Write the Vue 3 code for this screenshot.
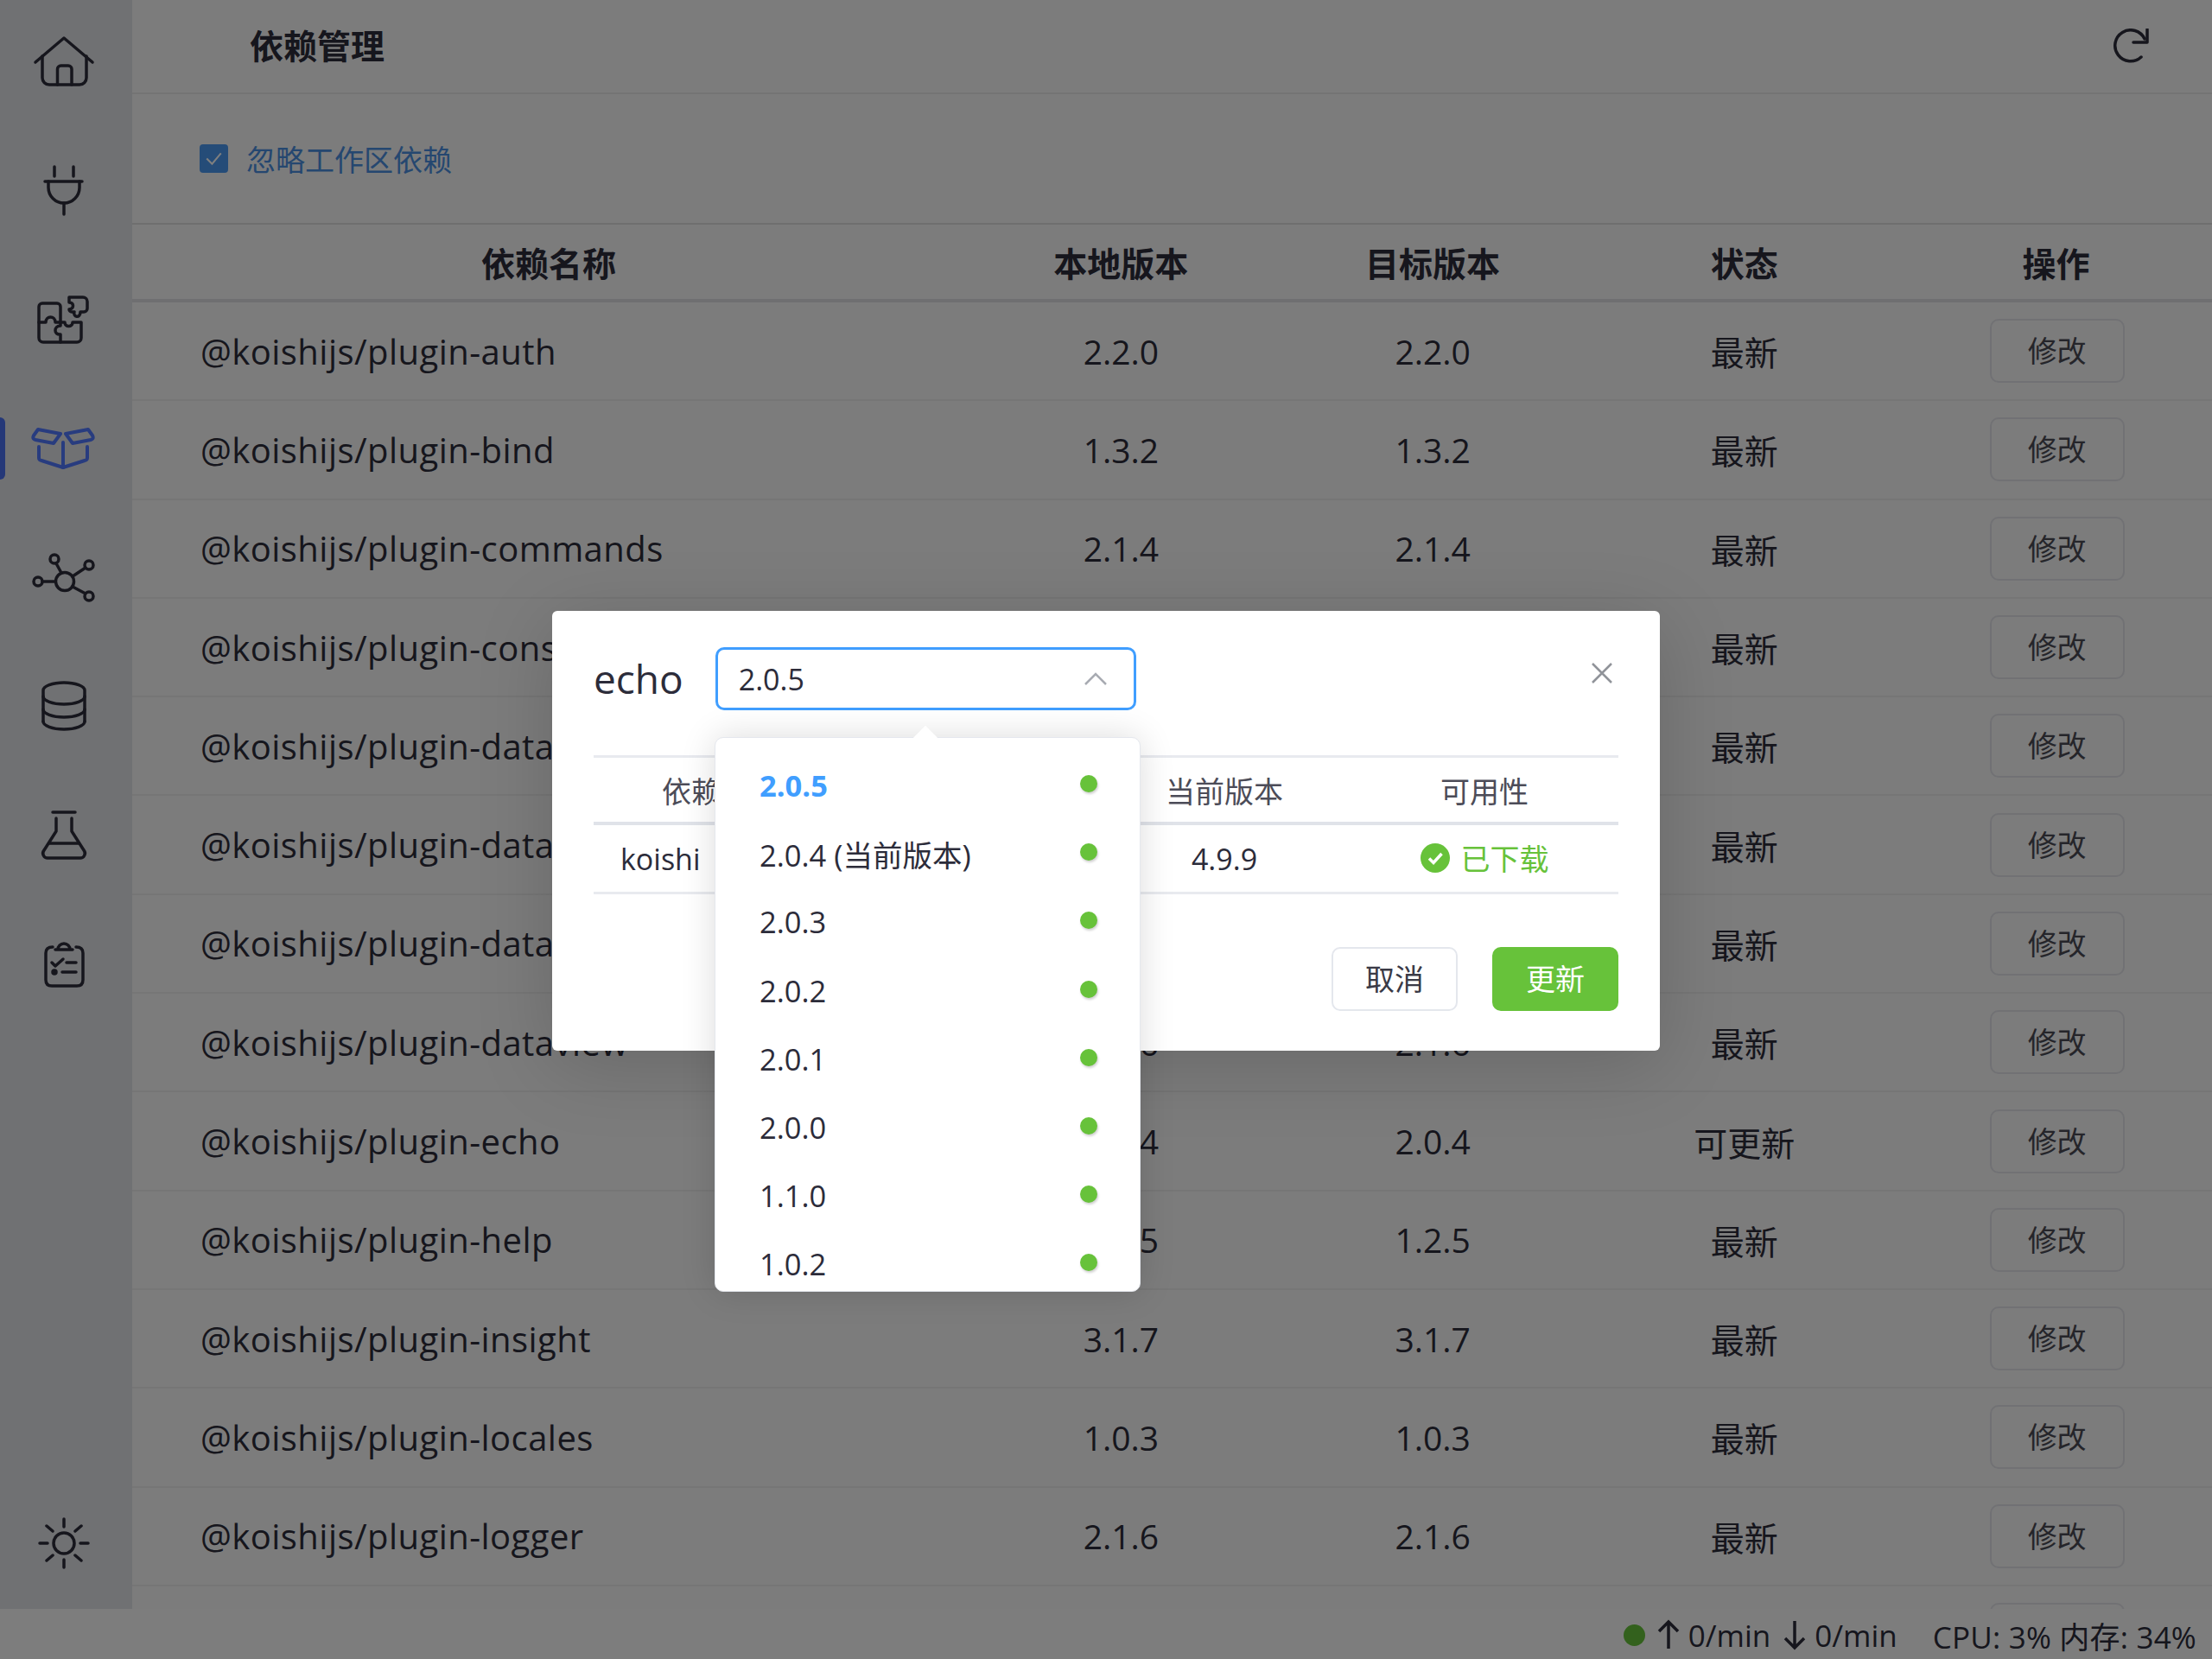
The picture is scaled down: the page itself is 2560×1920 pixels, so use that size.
<template>
  <div class="app">
    <div class="layout">
      <aside class="sidebar">
        <div class="nav-item">
          <svg class="nav-icon" viewBox="0 0 80 72">
            <path d="M7 36 L40 8 L73 36" />
            <path d="M15 29 V54 a8 8 0 0 0 8 8 H58 a8 8 0 0 0 8-8 V29" />
            <path d="M32.5 62 V44 a4 4 0 0 1 4-4 h8.5 a4 4 0 0 1 4 4 V62" />
          </svg>
        </div>
        <div class="nav-item">
          <svg class="nav-icon" viewBox="0 0 80 72">
            <path d="M29 8 V19 M51 8 V19 M18 25 H61" />
            <path d="M22 25 V32 a18 18 0 0 0 36 0 V25" />
            <path d="M40 50 V63" />
          </svg>
        </div>
        <div class="nav-item">
          <svg class="nav-icon" viewBox="0 0 80 72">
            <path d="M36 38 V21 a4 4 0 0 0-4-4 H15 a4 4 0 0 0-4 4 V57 a5 5 0 0 0 5 5 H55 a5 5 0 0 0 5-5 V39 H50 c0 6-9 6-9 0 H36" />
            <path d="M11 39 H19 c0-8 11-8 11 0 H36 V43 c-8 0-8 11 0 10 V62" />
            <path d="M46 10 H62 a5 5 0 0 1 5 5 V23 a4 4 0 0 1-4 4 H59 C59 35 50 33 52 27 H49 a3 3 0 0 1-3-3 c6-1 6-8 0-8 Z" />
          </svg>
        </div>
        <div class="nav-item active">
          <svg class="nav-icon" viewBox="0 0 90 70">
            <path d="M15 13 L41 18 L33 29 L12 25 Q8 24 10 20 Z" />
            <path d="M73 13 L47 18 L55 29 L76 25 Q80 24 78 20 Z" />
            <path d="M16 33 V46 a3 3 0 0 0 3 3 L44 57 L69 49 a3 3 0 0 0 3-3 V33" />
            <path d="M44 28 V57" />
          </svg>
        </div>
        <div class="nav-item">
          <svg class="nav-icon" viewBox="0 0 80 72">
            <circle cx="41" cy="41" r="10.5" />
            <circle cx="29" cy="15" r="5" />
            <circle cx="69" cy="22" r="5" />
            <circle cx="10" cy="41" r="5" />
            <circle cx="69" cy="58" r="5" />
            <path d="M31 20 L37 31 M65 25 L50 35 M15 41 H30 M65 55 L50 47" />
          </svg>
        </div>
        <div class="nav-item">
          <svg class="nav-icon" viewBox="0 0 80 72">
            <path d="M16 18 a24 9 0 0 1 48 0 V54 M16 18 V54" />
            <path d="M16 25 a24 9 0 0 0 48 0" />
            <path d="M16 40 a24 9 0 0 0 48 0" />
            <path d="M16 54 a24 9 0 0 0 48 0" />
          </svg>
        </div>
        <div class="nav-item">
          <svg class="nav-icon" viewBox="0 0 80 72">
            <path d="M27 10 H53" />
            <path d="M31 17 V32 L17 54 a5.5 5.5 0 0 0 5 9 H58 a5.5 5.5 0 0 0 5-9 L49 32 V17" />
            <path d="M23 46 H57" />
          </svg>
        </div>
        <div class="nav-item">
          <svg class="nav-icon" viewBox="0 0 80 72">
            <path d="M27 17 Q19 17 19 24 V55 Q19 62 26 62 H55 Q62 62 62 55 V24 Q62 17 54 17" />
            <path d="M30 20 H50 M33 20 a7 7 0 1 1 14 0" />
            <path d="M26 35 L30 39 L39 31 M43 35 H54 M38 46 H54" />
            <circle class="dot" cx="29" cy="46" r="2" />
          </svg>
        </div>
        <div class="nav-item nav-bottom">
          <svg class="nav-icon" viewBox="0 0 80 72">
            <circle cx="40" cy="36" r="12" />
            <path d="M40 8 V17 M40 55 V64 M12 36 H21 M59 36 H68 M20 16 L27 22 M60 16 L53 22 M20 56 L27 50 M60 56 L53 50" />
          </svg>
        </div>
      </aside>

      <main class="main">
        <header class="page-header">
          <h1>依赖管理</h1>
          <svg class="refresh" viewBox="0 0 42 42">
            <path d="M37 12 A18 18 0 1 0 33 33" />
            <path d="M40 1 V16 H24" />
          </svg>
        </header>

        <div class="toolbar">
          <label class="checkbox">
            <span class="checkbox__box">
              <svg viewBox="0 0 32 32"><path d="M8 16 L14 22 L24 10" /></svg>
            </span>
            <span class="checkbox__label">忽略工作区依赖</span>
          </label>
        </div>

        <div class="table-row table-head">
          <div>依赖名称</div>
          <div>本地版本</div>
          <div>目标版本</div>
          <div>状态</div>
          <div>操作</div>
        </div>
        <div v-for="dep in deps" :key="dep.name" class="table-row">
          <div class="dep-name">{{ dep.name }}</div>
          <div>{{ dep.local }}</div>
          <div>{{ dep.target }}</div>
          <div>{{ dep.status }}</div>
          <div><button class="edit-btn">修改</button></div>
        </div>
      </main>
    </div>

    <footer class="statusbar">
      <span class="status-dot"></span>
      <svg class="arrow" viewBox="0 0 26 36"><path d="M13 34 V3 M2 14 L13 3 L24 14" /></svg>
      <span class="stat">0/min</span>
      <svg class="arrow" viewBox="0 0 26 36"><path d="M13 2 V33 M2 22 L13 33 L24 22" /></svg>
      <span class="stat">0/min</span>
      <span class="usage">CPU: 3% 内存: 34%</span>
    </footer>

    <div class="overlay">
      <div class="dialog">
        <div class="dialog__head">
          <span class="dialog__title">echo</span>
          <div class="select">
            <span>2.0.5</span>
            <svg viewBox="0 0 28 16"><path d="M2 14 L14 2 L26 14" /></svg>
          </div>
          <svg class="dialog__close" viewBox="0 0 26 26"><path d="M2 2 L24 24 M24 2 L2 24" /></svg>
        </div>

        <table class="peer-table">
          <colgroup>
            <col class="col-name" />
            <col class="col-range" />
            <col class="col-current" />
            <col class="col-state" />
          </colgroup>
          <thead>
            <tr>
              <th>依赖名称</th>
              <th>版本要求</th>
              <th>当前版本</th>
              <th>可用性</th>
            </tr>
          </thead>
          <tbody>
            <tr>
              <td class="peer-name">koishi</td>
              <td>^4.9.9</td>
              <td>4.9.9</td>
              <td class="peer-ok">
                <svg viewBox="0 0 34 34">
                  <circle cx="17" cy="17" r="17" />
                  <path d="M10 17.5 L15 22.5 L24.5 12" />
                </svg>
                已下载
              </td>
            </tr>
          </tbody>
        </table>

        <div class="dialog__actions">
          <button class="btn">取消</button>
          <button class="btn btn--primary">更新</button>
        </div>

        <div class="dropdown">
          <span class="dropdown__arrow"></span>
          <div class="dropdown__list">
            <div
              v-for="v in versions"
              :key="v.label"
              :class="['dropdown__item', { selected: v.selected }]"
            >
              <span>{{ v.label }}</span>
              <span class="dropdown__dot"></span>
            </div>
          </div>
        </div>
      </div>
    </div>
  </div>
</template>

<script setup>
const deps = [
  { name: '@koishijs/plugin-auth', local: '2.2.0', target: '2.2.0', status: '最新' },
  { name: '@koishijs/plugin-bind', local: '1.3.2', target: '1.3.2', status: '最新' },
  { name: '@koishijs/plugin-commands', local: '2.1.4', target: '2.1.4', status: '最新' },
  { name: '@koishijs/plugin-console', local: '4.4.3', target: '4.4.3', status: '最新' },
  { name: '@koishijs/plugin-database-mysql', local: '4.0.0', target: '4.0.0', status: '最新' },
  { name: '@koishijs/plugin-database-sqlite', local: '3.0.0', target: '3.0.0', status: '最新' },
  { name: '@koishijs/plugin-database-memory', local: '1.5.0', target: '1.5.0', status: '最新' },
  { name: '@koishijs/plugin-dataview', local: '2.1.6', target: '2.1.6', status: '最新' },
  { name: '@koishijs/plugin-echo', local: '2.0.4', target: '2.0.4', status: '可更新' },
  { name: '@koishijs/plugin-help', local: '1.2.5', target: '1.2.5', status: '最新' },
  { name: '@koishijs/plugin-insight', local: '3.1.7', target: '3.1.7', status: '最新' },
  { name: '@koishijs/plugin-locales', local: '1.0.3', target: '1.0.3', status: '最新' },
  { name: '@koishijs/plugin-logger', local: '2.1.6', target: '2.1.6', status: '最新' },
  { name: '@koishijs/plugin-manager', local: '1.6.2', target: '1.6.2', status: '最新' },
]

const versions = [
  { label: '2.0.5', selected: true },
  { label: '2.0.4 (当前版本)' },
  { label: '2.0.3' },
  { label: '2.0.2' },
  { label: '2.0.1' },
  { label: '2.0.0' },
  { label: '1.1.0' },
  { label: '1.0.2' },
  { label: '1.0.1' },
]
</script>

<style>
html,
body {
  margin: 0;
  background: #fff;
}
</style>

<style scoped>
.app {
  position: relative;
  display: flex;
  flex-direction: column;
  width: 2560px;
  height: 1920px;
  overflow: hidden;
  background: #f8f8f8;
  color: #2c2c3a;
  font-family: "Open Sans", "Noto Sans CJK SC", sans-serif;
  font-size: 39px;
}

.layout {
  flex: 1;
  display: flex;
  min-height: 0;
}

.sidebar {
  flex: 0 0 153px;
  display: flex;
  flex-direction: column;
  gap: 5px;
  padding-bottom: 4px;
  box-sizing: border-box;
  background: #e1e2e6;
}

.nav-item {
  position: relative;
  flex: 0 0 144px;
  display: flex;
  align-items: center;
  justify-content: center;
  padding-right: 6px;
}

.nav-bottom {
  margin-top: auto;
}

.nav-icon {
  width: 80px;
  height: 72px;
  fill: none;
  stroke: #2c2c3a;
  stroke-width: 3.5;
  stroke-linecap: round;
  stroke-linejoin: round;
}

.nav-icon .dot {
  fill: #2c2c3a;
}

.nav-item.active .nav-icon {
  width: 90px;
  height: 70px;
  stroke: #5078ff;
  stroke-width: 4;
}

.nav-item.active::before {
  content: "";
  position: absolute;
  left: 0;
  top: 36px;
  width: 6px;
  height: 72px;
  border-radius: 0 6px 6px 0;
  background: #4a70f0;
}

.main {
  flex: 1;
  min-width: 0;
  overflow: hidden;
}

.page-header {
  display: flex;
  align-items: center;
  justify-content: space-between;
  height: 107px;
  padding: 0 73px 0 136px;
  border-bottom: 2px solid #e8e8e8;
  box-sizing: content-box;
}

.page-header h1 {
  margin: 0 0 6px;
  font-size: 39px;
  font-weight: 700;
}

.refresh {
  width: 42px;
  height: 42px;
  fill: none;
  stroke: #2c2c3a;
  stroke-width: 3.5;
  stroke-linecap: round;
  stroke-linejoin: round;
}

.toolbar {
  display: flex;
  align-items: center;
  height: 151px;
  padding-bottom: 1px;
  padding-left: 78px;
  border-bottom: 2px solid #dedede;
  box-sizing: border-box;
}

.checkbox {
  display: flex;
  align-items: center;
  gap: 21px;
  color: #4b8fe0;
  font-size: 34px;
}

.checkbox__box {
  display: block;
  width: 33px;
  height: 33px;
  border-radius: 4px;
  background: #4a98f0;
}

.checkbox__box svg {
  display: block;
  fill: none;
  stroke: #fff;
  stroke-width: 2;
}

.table-row {
  display: grid;
  grid-template-columns: 964px repeat(4, 1fr);
  align-items: center;
  height: 114.3px;
  box-sizing: border-box;
  border-bottom: 2px solid #ececec;
  text-align: center;
}

.table-head {
  height: 90px;
  border-bottom: 4px solid #dedfe2;
  font-weight: 700;
}

.dep-name {
  padding-left: 79px;
  font-size: 40px;
  letter-spacing: 0.45px;
  text-align: left;
}

.edit-btn {
  width: 156px;
  height: 74px;
  margin-left: 2px;
  padding: 0 0 3px;
  border: 2px solid #e2e3e8;
  border-radius: 10px;
  background: transparent;
  color: #4a4a55;
  font-family: inherit;
  font-size: 34px;
}

.statusbar {
  position: relative;
  flex: 0 0 58px;
  display: flex;
  align-items: center;
  justify-content: flex-end;
  padding: 2px 18px 0 0;
  box-sizing: border-box;
  background: #fafafa;
  font-size: 35px;
}

.status-dot {
  width: 25px;
  height: 25px;
  margin-right: 14px;
  border-radius: 50%;
  background: #67c23a;
}

.arrow {
  width: 26px;
  height: 36px;
  margin-right: 10px;
  fill: none;
  stroke: #2c2c3a;
  stroke-width: 3.5;
}

.stat {
  margin-right: 15px;
}

.usage {
  margin-left: 26px;
  letter-spacing: 0.2px;
}

.overlay {
  position: absolute;
  inset: 0;
  display: flex;
  align-items: center;
  justify-content: center;
  background: rgba(0, 0, 0, 0.5);
}

.dialog {
  position: relative;
  width: 1282px;
  height: 509px;
  margin-top: 3px;
  padding: 42px 48px 47px;
  box-sizing: border-box;
  border-radius: 6px;
  background: #fff;
  box-shadow: 0 16px 90px rgba(0, 0, 0, 0.16);
}

.dialog__head {
  position: relative;
  display: flex;
  align-items: center;
  gap: 37px;
}

.dialog__title {
  margin-top: -2px;
  font-size: 46px;
}

.select {
  display: flex;
  align-items: center;
  justify-content: space-between;
  width: 487px;
  height: 73px;
  padding: 0 30px 0 24px;
  box-sizing: border-box;
  border: 3px solid #409eff;
  border-radius: 10px;
  font-size: 34px;
}

.select svg {
  width: 28px;
  height: 16px;
  fill: none;
  stroke: #a8abb2;
  stroke-width: 2.5;
}

.dialog__close {
  position: absolute;
  right: 6px;
  top: 17px;
  width: 26px;
  height: 26px;
  fill: none;
  stroke: #909399;
  stroke-width: 2.5;
}

.peer-table {
  width: 100%;
  margin-top: 52px;
  table-layout: fixed;
  border-collapse: collapse;
  font-size: 34px;
}

.col-name {
  width: 294px;
}
.col-range {
  width: 290px;
}
.col-current {
  width: 292px;
}
.col-state {
  width: 310px;
}

.peer-table th {
  height: 74px;
  padding: 0;
  border-top: 3px solid #e8eaef;
  border-bottom: 4px solid #e0e3e9;
  color: #4c4c58;
  font-weight: 400;
}

.peer-table td {
  height: 75px;
  padding: 0;
  border-bottom: 3px solid #e8eaef;
  text-align: center;
}

.peer-table .peer-name {
  padding-left: 31px;
  text-align: left;
}

.peer-table .peer-ok {
  padding-bottom: 2px;
  color: #67c23a;
}

.peer-ok svg {
  width: 34px;
  height: 34px;
  margin-right: 4px;
  vertical-align: -3px;
}

.peer-ok circle {
  fill: #67c23a;
}

.peer-ok path {
  fill: none;
  stroke: #fff;
  stroke-width: 3.5;
}

.dialog__actions {
  display: flex;
  justify-content: flex-end;
  gap: 40px;
  margin-top: 61px;
}

.btn {
  width: 146px;
  height: 74px;
  padding: 0 0 4px;
  border: 2px solid #e4e7ed;
  border-radius: 10px;
  background: #fff;
  color: #3a3a46;
  font-family: inherit;
  font-size: 34px;
}

.btn--primary {
  border-color: #67c23a;
  background: #67c23a;
  color: #fff;
}

.dropdown {
  position: absolute;
  left: 188px;
  top: 146px;
  width: 493px;
  height: 642px;
  box-sizing: border-box;
  border: 1px solid #e4e7ed;
  border-radius: 10px;
  background: #fff;
  box-shadow: 0 0 40px rgba(0, 0, 0, 0.14);
}

.dropdown__arrow {
  position: absolute;
  left: 233px;
  top: -10px;
  width: 20px;
  height: 20px;
  transform: rotate(45deg);
  background: #fff;
}

.dropdown__list {
  position: relative;
  height: 100%;
  padding-top: 15px;
  box-sizing: border-box;
  border-radius: 10px;
  overflow: hidden;
}

.dropdown__item {
  display: flex;
  align-items: center;
  justify-content: space-between;
  height: 79.2px;
  padding: 0 49px 0 51px;
  font-size: 34.5px;
}

.dropdown__item.selected {
  color: #409eff;
  font-weight: 700;
}

.dropdown__dot {
  width: 20px;
  height: 20px;
  margin-top: -3px;
  border-radius: 50%;
  background: #67c23a;
  box-shadow: 1px 2px 3px rgba(0, 0, 0, 0.2);
}
</style>
